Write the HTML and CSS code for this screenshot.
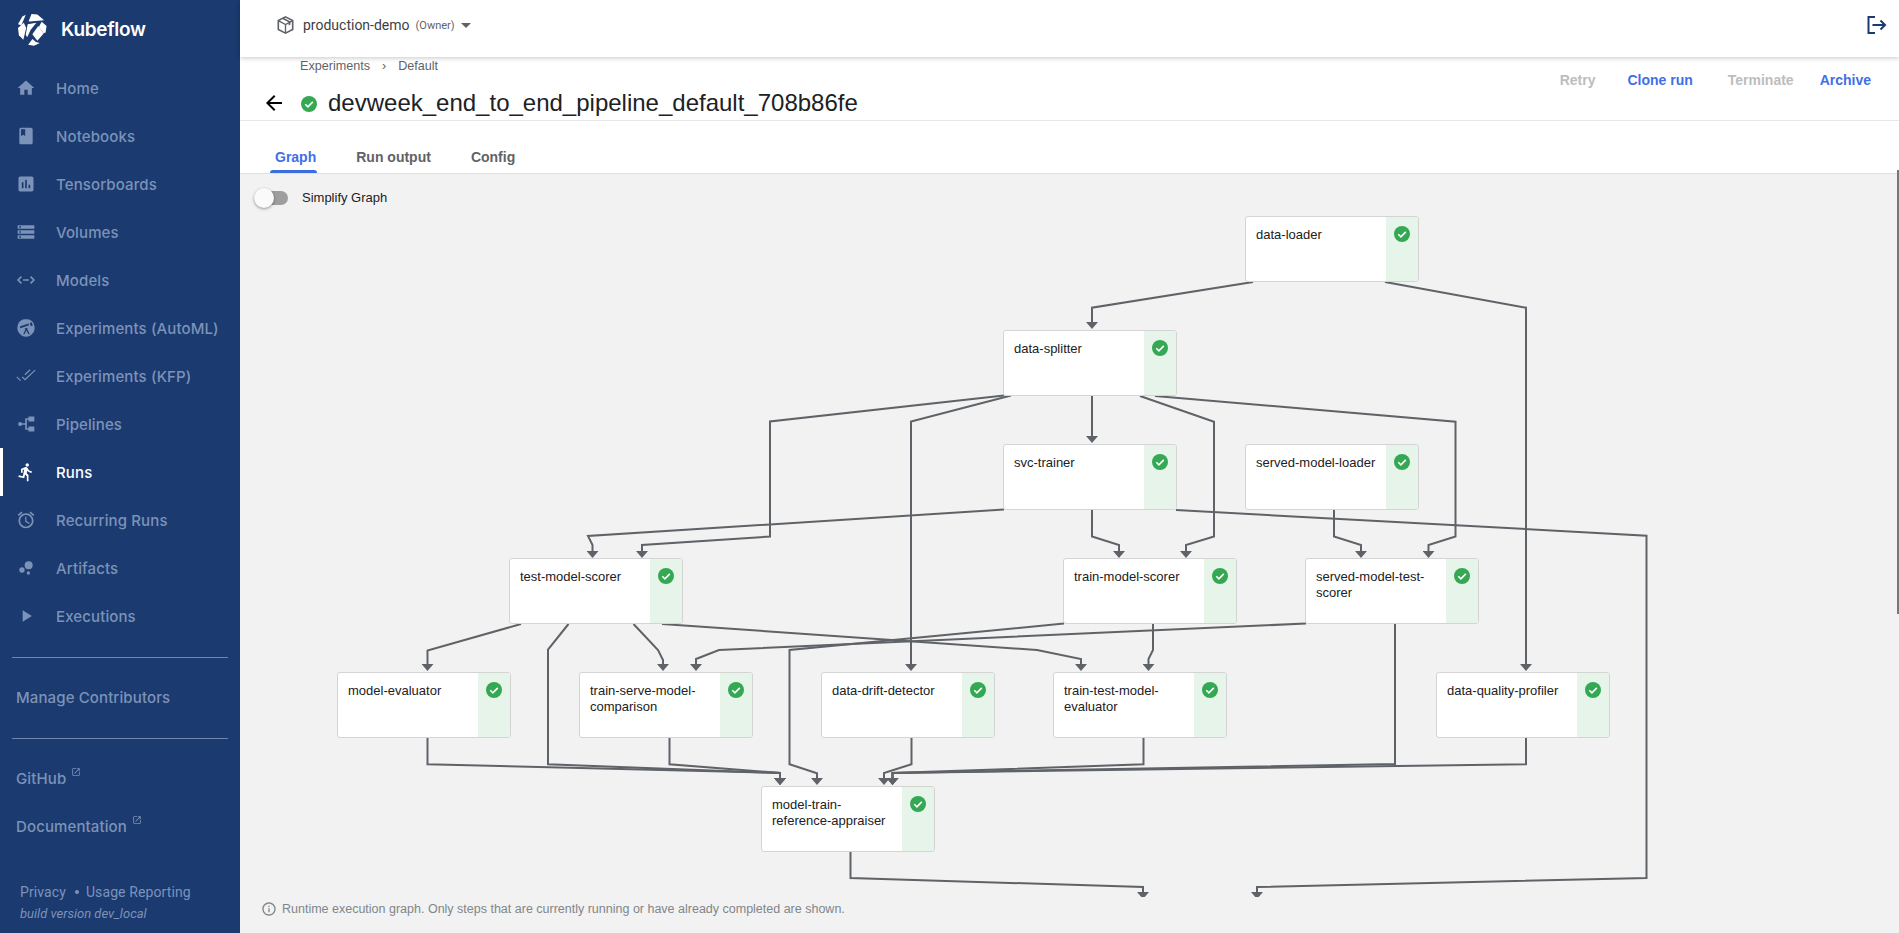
FILE: index.html
```html
<!DOCTYPE html>
<html lang="en">
<head>
<meta charset="utf-8">
<title>Kubeflow</title>
<link rel="stylesheet" href="styles.css">
</head>
<body>
<div class="app">
  <aside class="sidebar">
    <div class="brand">
      <svg class="brand-logo" viewBox="0 0 32 34" fill="#fff">
        <path d="M1 11.500L5.500 3.500L9 1.800L4.500 12.500Z"/>
        <path d="M12 8.500L15 1L21 1.500L28 7.500L13 8.800Z"/>
        <path d="M25.500 9L30.500 13.500L29.500 20L27.500 20.800L22.500 14.500Z"/>
        <path d="M1 15.500L7 10L9.500 15.500L6.500 27.500L2 23Z"/>
        <path d="M11 11.500L20 10L14 17.500L10.500 25L9 22.500Z"/>
        <path d="M22 13.500L27.500 21L21 28.500L15.800 22Z"/>
        <path d="M11.500 32.800L16 26.800L19.500 30L23.500 31L17.500 33.800Z"/>
      </svg>
      <span class="brand-name">Kubeflow</span>
    </div>
    <nav class="nav">
      <a class="nav-item"><svg class="nav-icon" viewBox="0 0 24 24"><path d="M10 20v-6h4v6h5v-8h3L12 3 2 12h3v8z"/></svg>Home</a>
      <a class="nav-item"><svg class="nav-icon" viewBox="0 0 24 24"><path d="M18 2H6c-1.100 0-2 .9-2 2v16c0 1.100.9 2 2 2h12c1.100 0 2-.9 2-2V4c0-1.100-.9-2-2-2zM6 4h5v8l-2.500-1.500L6 12V4z"/></svg>Notebooks</a>
      <a class="nav-item"><svg class="nav-icon" viewBox="0 0 24 24"><path d="M19 3H5c-1.100 0-2 .9-2 2v14c0 1.100.9 2 2 2h14c1.100 0 2-.9 2-2V5c0-1.100-.9-2-2-2zM9 17H7v-7h2v7zm4 0h-2V7h2v10zm4 0h-2v-4h2v4z"/></svg>Tensorboards</a>
      <a class="nav-item"><svg class="nav-icon" viewBox="0 0 24 24"><path d="M2 20h20v-4H2v4zm2-3h2v2H4v-2zM2 4v4h20V4H2zm4 3H4V5h2v2zm-4 7h20v-4H2v4zm2-3h2v2H4v-2z"/></svg>Volumes</a>
      <a class="nav-item"><svg class="nav-icon nav-icon-line" viewBox="0 0 24 24"><path d="M6.500 8L2.500 12l4 4M17.500 8l4 4-4 4M8.500 12h7"/></svg>Models</a>
      <a class="nav-item"><svg class="nav-icon" viewBox="0 0 24 24"><path fill-rule="evenodd" d="M12 1.500c2.500 0 5 .4 7 2.200 2 1.900 3.300 4.700 3.300 8.300 0 2.300-.6 4.300-2 6-2 2.500-4.700 4.500-8.300 4.500s-6.300-2-8.300-4.500C2.300 16.300 1.700 14.300 1.700 12c0-3.600 1.300-6.400 3.300-8.300 2-1.800 4.500-2.200 7-2.200zM4.500 10.300l.7 1.900 10.500-3.400-.8-2.300zM16.400 6l1.500 3.800 2.300-.9L18.700 5zM10.300 12.500l.9 1.700-2.600 5.300h1.600l2.300-4.600 2.400 4.600h1.600l-3-6.200.5-1.500z"/></svg>Experiments (AutoML)</a>
      <a class="nav-item"><svg class="nav-icon" viewBox="0 0 24 24"><path d="M23.500 5.500l-1-1L10.800 15.300l-3-2.800-1 1 4 4zM17.500 5l-1-1-6.300 6 1 1zM.5 13.500l4.500 4.500 1-1-4.500-4.500z"/></svg>Experiments (KFP)</a>
      <a class="nav-item"><svg class="nav-icon" viewBox="0 0 24 24"><path d="M5 9.500a2.500 2.500 0 0 1 2.300 1.500H11V6a1 1 0 0 1 1-1h3V3h7v6h-7V7h-2v10h2v-2h7v6h-7v-2h-3a1 1 0 0 1-1-1v-5H7.300A2.500 2.500 0 1 1 5 9.500z"/></svg>Pipelines</a>
      <a class="nav-item is-active"><svg class="nav-icon" viewBox="0 0 24 24"><path d="M13.490 5.480c1.100 0 2-.9 2-2s-.9-2-2-2-2 .9-2 2 .9 2 2 2zm-3.600 13.900l1-4.400 2.100 2v6h2v-7.500l-2.100-2 .6-3c1.300 1.500 3.300 2.500 5.500 2.500v-2c-1.900 0-3.500-1-4.300-2.400l-1-1.600c-.4-.6-1-1-1.700-1-.3 0-.5.1-.8.1l-5.200 2.200v4.700h2v-3.400l1.800-.7-1.600 8.100-4.900-1-.4 2 7 1.400z"/></svg>Runs</a>
      <a class="nav-item"><svg class="nav-icon" viewBox="0 0 24 24"><path d="M22 5.720l-4.600-3.860-1.290 1.530 4.600 3.860L22 5.720zM7.880 3.390L6.600 1.860 2 5.710l1.290 1.530 4.590-3.850zM12.500 8H11v6l4.750 2.850.75-1.230-4-2.370V8zM12 4c-4.970 0-9 4.030-9 9s4.020 9 9 9c4.970 0 9-4.030 9-9s-4.030-9-9-9zm0 16c-3.870 0-7-3.130-7-7s3.130-7 7-7 7 3.130 7 7-3.130 7-7 7z"/></svg>Recurring Runs</a>
      <a class="nav-item"><svg class="nav-icon" viewBox="0 0 24 24"><circle cx="7.200" cy="14.400" r="3.200"/><circle cx="14.800" cy="18" r="2"/><circle cx="15.200" cy="8.800" r="4.800"/></svg>Artifacts</a>
      <a class="nav-item"><svg class="nav-icon" viewBox="0 0 24 24"><path d="M8 5v14l11-7z"/></svg>Executions</a>
    </nav>
    <div class="side-rule"></div>
    <a class="side-link">Manage Contributors</a>
    <div class="side-rule side-rule-low"></div>
    <a class="side-link">GitHub<svg class="ext-icon" viewBox="0 0 24 24"><path d="M19 19H5V5h7V3H5c-1.110 0-2 .9-2 2v14c0 1.100.89 2 2 2h14c1.100 0 2-.9 2-2v-7h-2v7zM14 3v2h3.590l-9.830 9.830 1.410 1.410L19 6.410V10h2V3h-7z"/></svg></a>
    <a class="side-link">Documentation<svg class="ext-icon" viewBox="0 0 24 24"><path d="M19 19H5V5h7V3H5c-1.110 0-2 .9-2 2v14c0 1.100.89 2 2 2h14c1.100 0 2-.9 2-2v-7h-2v7zM14 3v2h3.590l-9.830 9.830 1.410 1.410L19 6.410V10h2V3h-7z"/></svg></a>
    <div class="side-foot">
      <div class="foot-links"><span>Privacy</span><i class="foot-dot"></i><span>Usage Reporting</span></div>
      <div class="foot-build">build version dev_local</div>
    </div>
  </aside>

  <main class="main">
    <header class="topbar">
      <div class="namespace">
        <svg class="cube" viewBox="0 0 18 20"><path d="M9 1l8 4v10l-8 4-8-4V5z" fill="none" stroke="#5f6368" stroke-width="1.800"/><path d="M1.500 5.500L9 9.500l7.500-4M9 9.500V19" fill="none" stroke="#5f6368" stroke-width="1.500"/><path d="M5 3l7.500 4v3.500l2-1V6L7 2z" fill="#5f6368"/></svg>
        <span class="ns-name">production-demo</span>
        <span class="ns-role">(Owner)</span>
        <i class="ns-caret"></i>
      </div>
      <svg class="logout" viewBox="0 0 20 18"><path d="M8 1H1.500v16H8M5.500 9H18M13.500 4.500L18 9l-4.500 4.500" fill="none" stroke="#1b3a6f" stroke-width="2"/></svg>
    </header>

    <section class="pagehead">
      <div class="head-left">
        <div class="crumbs"><span>Experiments</span><span class="crumb-sep">›</span><span>Default</span></div>
        <div class="title-row">
          <svg class="back" viewBox="0 0 24 24"><path d="M20 11H7.830l5.590-5.590L12 4l-8 8 8 8 1.410-1.410L7.830 13H20v-2z"/></svg>
          <svg class="title-check" viewBox="0 0 16 16"><circle cx="8" cy="8" r="8" fill="#34a853"/><path d="M4.300 8.300l2.600 2.600 4.900-5" fill="none" stroke="#fff" stroke-width="1.600"/></svg>
          <h1 class="title">devweek_end_to_end_pipeline_default_708b86fe</h1>
        </div>
      </div>
      <div class="actions">
        <span class="action is-off action-retry">Retry</span>
        <span class="action action-clone">Clone run</span>
        <span class="action is-off action-term">Terminate</span>
        <span class="action">Archive</span>
      </div>
    </section>

    <div class="tabs">
      <span class="tab is-current">Graph</span>
      <span class="tab">Run output</span>
      <span class="tab">Config</span>
    </div>

    <section class="graph">
      <div class="toggle-row">
        <span class="toggle"><i class="toggle-thumb"></i></span>
        <span class="toggle-label">Simplify Graph</span>
      </div>
      <div class="canvas">
        <svg class="edges" viewBox="240 174 1659 723" width="1659" height="723">
          <defs>
            <marker id="arrow" viewBox="0 0 12 7" refX="6" refY="0" markerWidth="12" markerHeight="7" markerUnits="userSpaceOnUse" orient="0">
              <path d="M0 0h12L6 7z" fill="#5f6368"/>
            </marker>
          </defs>
          <g class="edge-set">
            <polyline points="1253,282 1092,307.700 1092,322"/>
            <polyline points="1385,282 1526,307.700 1526,664"/>
            <polyline points="1004,395.500 770,421.500 770,536.500 642,545 642,551"/>
            <polyline points="1011,395.500 911,421.500 911,664"/>
            <polyline points="1092,396 1092,436"/>
            <polyline points="1140,396 1214,421.700 1214,536.500 1186,545 1186,551"/>
            <polyline points="1155,396 1455.500,421.700 1455.500,536.500 1428.500,545 1428.500,551"/>
            <polyline points="1004,509.500 588,536 592.500,545 592.500,551"/>
            <polyline points="1092,510 1092,536.500 1119,545 1119,551"/>
            <polyline points="1176,510 1646.500,535.700 1646.500,878 1257,887 1257,892"/>
            <polyline points="1334,510 1334,536.500 1361,545 1361,551"/>
            <polyline points="521,624 427.500,650.500 427.500,664"/>
            <polyline points="568.500,624 548,649.500 548,764.300 780,773 780,778"/>
            <polyline points="633.500,624 658,650 663,660 663,664"/>
            <polyline points="662,624 1037,650 1081,659 1081,664"/>
            <polyline points="1064,623.500 789.500,650 789.500,764.300 817,773.300 817,778"/>
            <polyline points="1306,623.500 719,650 696,659 696,664"/>
            <polyline points="1153,624 1153,650 1148.500,659 1148.500,664"/>
            <polyline points="1395,624 1395,764 892.500,773 892.500,778"/>
            <polyline points="427.500,738 427.500,764.300 780,773 780,778"/>
            <polyline points="669.500,738 669.500,764.300 780,773 780,778"/>
            <polyline points="911.500,738 911.500,764.300 884,773 884,778"/>
            <polyline points="1143.500,738 1143.500,764.300 892.500,773 892.500,778"/>
            <polyline points="1526,738 1526,764.300 892.500,773 892.500,778"/>
            <polyline points="850.500,852 850.500,878 1143,887 1143,892"/>
          </g>
        </svg>
        <div class="node" style="left:1005px;top:42px"><div class="node-label">data-loader</div><div class="node-status"><svg class="check" viewBox="0 0 16 16"><circle cx="8" cy="8" r="8"/><path d="M4.300 8.300l2.600 2.600 4.900-5"/></svg></div></div>
        <div class="node" style="left:763px;top:156px"><div class="node-label">data-splitter</div><div class="node-status"><svg class="check" viewBox="0 0 16 16"><circle cx="8" cy="8" r="8"/><path d="M4.300 8.300l2.600 2.600 4.900-5"/></svg></div></div>
        <div class="node" style="left:763px;top:270px"><div class="node-label">svc-trainer</div><div class="node-status"><svg class="check" viewBox="0 0 16 16"><circle cx="8" cy="8" r="8"/><path d="M4.300 8.300l2.600 2.600 4.900-5"/></svg></div></div>
        <div class="node" style="left:1005px;top:270px"><div class="node-label">served-model-loader</div><div class="node-status"><svg class="check" viewBox="0 0 16 16"><circle cx="8" cy="8" r="8"/><path d="M4.300 8.300l2.600 2.600 4.900-5"/></svg></div></div>
        <div class="node" style="left:269px;top:384px"><div class="node-label">test-model-scorer</div><div class="node-status"><svg class="check" viewBox="0 0 16 16"><circle cx="8" cy="8" r="8"/><path d="M4.300 8.300l2.600 2.600 4.900-5"/></svg></div></div>
        <div class="node" style="left:823px;top:384px"><div class="node-label">train-model-scorer</div><div class="node-status"><svg class="check" viewBox="0 0 16 16"><circle cx="8" cy="8" r="8"/><path d="M4.300 8.300l2.600 2.600 4.900-5"/></svg></div></div>
        <div class="node" style="left:1065px;top:384px"><div class="node-label">served-model-test-scorer</div><div class="node-status"><svg class="check" viewBox="0 0 16 16"><circle cx="8" cy="8" r="8"/><path d="M4.300 8.300l2.600 2.600 4.900-5"/></svg></div></div>
        <div class="node" style="left:97px;top:498px"><div class="node-label">model-evaluator</div><div class="node-status"><svg class="check" viewBox="0 0 16 16"><circle cx="8" cy="8" r="8"/><path d="M4.300 8.300l2.600 2.600 4.900-5"/></svg></div></div>
        <div class="node" style="left:339px;top:498px"><div class="node-label">train-serve-model-comparison</div><div class="node-status"><svg class="check" viewBox="0 0 16 16"><circle cx="8" cy="8" r="8"/><path d="M4.300 8.300l2.600 2.600 4.900-5"/></svg></div></div>
        <div class="node" style="left:581px;top:498px"><div class="node-label">data-drift-detector</div><div class="node-status"><svg class="check" viewBox="0 0 16 16"><circle cx="8" cy="8" r="8"/><path d="M4.300 8.300l2.600 2.600 4.900-5"/></svg></div></div>
        <div class="node" style="left:813px;top:498px"><div class="node-label">train-test-model-evaluator</div><div class="node-status"><svg class="check" viewBox="0 0 16 16"><circle cx="8" cy="8" r="8"/><path d="M4.300 8.300l2.600 2.600 4.900-5"/></svg></div></div>
        <div class="node" style="left:1196px;top:498px"><div class="node-label">data-quality-profiler</div><div class="node-status"><svg class="check" viewBox="0 0 16 16"><circle cx="8" cy="8" r="8"/><path d="M4.300 8.300l2.600 2.600 4.900-5"/></svg></div></div>
        <div class="node" style="left:521px;top:612px"><div class="node-label">model-train-reference-appraiser</div><div class="node-status"><svg class="check" viewBox="0 0 16 16"><circle cx="8" cy="8" r="8"/><path d="M4.300 8.300l2.600 2.600 4.900-5"/></svg></div></div>
      </div>
      <div class="graph-note">
        <svg class="info" viewBox="0 0 24 24"><path d="M11 17h2v-6h-2v6zm1-15C6.480 2 2 6.480 2 12s4.480 10 10 10 10-4.480 10-10S17.520 2 12 2zm0 18c-4.410 0-8-3.590-8-8s3.590-8 8-8 8 3.590 8 8-3.590 8-8 8zM11 9h2V7h-2v2z"/></svg>
        <span>Runtime execution graph. Only steps that are currently running or have already completed are shown.</span>
      </div>
      <i class="scroll-thumb"></i>
    </section>
  </main>
</div>
</body>
</html>
```
FILE: styles.css
```css
* { box-sizing: border-box; }
html, body { margin: 0; height: 100%; overflow: hidden; }
body { font-family: "Liberation Sans", Arial, sans-serif; background: #fff; color: #202124; }

.app { display: flex; height: 933px; }

/* Sidebar */
.sidebar { width: 240px; flex: none; background: #1b3a6f; color: #7c93b9; display: flex; flex-direction: column; }
.brand { height: 64px; display: flex; align-items: flex-start; padding: 13px 0 0 17px; }
.brand-logo { width: 31px; height: 33px; flex: none; }
.brand-name { font: 600 19px/34px Inter, sans-serif; color: #fff; margin-left: 13px; letter-spacing: -0.3px; }
.nav { display: flex; flex-direction: column; }
.nav-item { height: 48px; display: flex; align-items: center; padding-left: 16px; font: 500 15px Inter, sans-serif; letter-spacing: .12px; }
.nav-icon { width: 20px; height: 20px; margin-right: 20px; fill: currentColor; flex: none; }
.nav-icon-line { fill: none; stroke: currentColor; stroke-width: 2; }
.nav-item.is-active { color: #fff; box-shadow: inset 3px 0 0 #fff; }
.side-rule { height: 1px; margin: 17px 12px 0; background: #6f87ae; flex: none; }
.side-rule-low { margin-top: 17px; margin-bottom: 15px; }
.side-link { height: 48px; display: flex; align-items: center; padding-left: 16px; font: 500 15px Inter, sans-serif; letter-spacing: .12px; flex: none; }
.side-rule + .side-link { margin-top: 15px; }
.side-rule-low + .side-link { margin-top: 0; }
.ext-icon { width: 10px; height: 10px; fill: currentColor; margin: -12px 0 0 5px; }
.side-foot { margin-top: 32px; padding-left: 20px; font-family: Roboto, sans-serif; }
.foot-links { display: flex; align-items: center; font-size: 14px; line-height: 20px; letter-spacing: .1px; }
.foot-dot { width: 4px; height: 4px; border-radius: 50%; background: currentColor; margin: 0 7px 0 9px; }
.foot-build { font-size: 13px; font-style: italic; line-height: 20px; margin-top: 2px; }

/* Main column */
.main { flex: 1; min-width: 0; display: flex; flex-direction: column; }
.topbar { height: 57px; flex: none; display: flex; align-items: center; justify-content: space-between; padding: 0 12px 7px 37px; background: #fff; box-shadow: 0 1px 5px rgba(0,0,0,.22); position: relative; z-index: 1; }
.namespace { display: flex; align-items: center; color: #5f6368; }
.cube { width: 17px; height: 18px; margin-right: 9px; }
.ns-name { font: 14px Roboto, sans-serif; color: #3c4043; }
.ns-role { font: 11px Roboto, sans-serif; margin-left: 6px; }
.ns-caret { width: 0; height: 0; border: 5px solid transparent; border-top-color: #5f6368; border-bottom: 0; margin-left: 6px; }
.logout { width: 20px; height: 18px; }

.pagehead { height: 64px; flex: none; display: flex; justify-content: space-between; border-bottom: 1px solid #e8e8e8; }
.head-left { display: flex; flex-direction: column; }
.crumbs { display: flex; padding: 2px 0 0 60px; font: 12.600px/14px "Liberation Sans", Arial, sans-serif; color: #5f6368; }
.crumb-sep { margin: 0 12px; }
.title-row { display: flex; align-items: center; padding: 15px 0 0 24px; }
.back { width: 24px; height: 24px; flex: none; fill: #000; margin-right: 15px; margin-left: -2px; }
.title-check { width: 16px; height: 16px; margin-right: 11px; flex: none; margin-top: 2px; }
.title { margin: 0; font: 400 24px/30px "Liberation Sans", Arial, sans-serif; color: #202124; }
.actions { display: flex; padding: 15px 0 0; margin-right: 28px; font: 700 14px/16px "Liberation Sans", Arial, sans-serif; color: #3f6fe8; }
.action { display: block; }
.action.is-off { color: #bdbdbd; }
.action-retry { margin-right: 32px; }
.action-clone { margin-right: 35px; }
.action-term { margin-right: 26px; }

.tabs { height: 53px; flex: none; display: flex; padding-left: 30px; border-bottom: 1px solid #e0e0e0; font: 700 14px/20px "Liberation Sans", Arial, sans-serif; color: #5f6368; }
.tab { padding: 26px 0 0 0; margin-left: 5px; margin-right: 35px; position: relative; }
.tab.is-current { color: #3f6fe8; }
.tab.is-current::after { content: ""; position: absolute; left: -5px; right: -1px; bottom: 0; height: 3px; background: #3b6de0; border-radius: 3px 3px 0 0; }

/* Graph */
.graph { flex: 1; background: #f2f2f2; position: relative; display: flex; flex-direction: column; min-height: 0; }
.toggle-row { position: absolute; left: 14px; top: 16px; z-index: 2; display: flex; align-items: center; }
.toggle { width: 34px; height: 14px; border-radius: 7px; background: #9e9e9e; position: relative; display: block; }
.toggle-thumb { position: absolute; left: 0; top: -3px; width: 20px; height: 20px; border-radius: 50%; background: #fafafa; box-shadow: 0 1px 3px rgba(0,0,0,.4); }
.toggle-label { font-size: 13px; margin-left: 14px; color: #202124; }
.canvas { position: relative; height: 723px; flex: none; overflow: hidden; }
.edges { position: absolute; left: 0; top: 0; display: block; }
.edge-set polyline { fill: none; stroke: #5f6368; stroke-width: 2; marker-end: url(#arrow); }
.node { position: absolute; width: 174px; height: 66px; display: flex; background: #fff; border: 1px solid #d4d4d4; border-radius: 3px; }
.node-label { flex: 1; min-width: 0; padding: 10px 8px 0 10px; font-size: 13px; line-height: 16px; color: #202124; }
.node-status { width: 32px; flex: none; background: #e6f4ea; display: flex; justify-content: center; padding-top: 9px; border-radius: 0 2px 2px 0; }
.check { width: 16px; height: 16px; }
.check circle { fill: #34a853; }
.check path { fill: none; stroke: #fff; stroke-width: 1.600; }
.graph-note { height: 36px; flex: none; display: flex; align-items: center; padding: 0 0 12px 21px; font-size: 12.500px; color: #80868b; }
.info { width: 16px; height: 16px; fill: #80868b; margin-right: 5px; }
.scroll-thumb { position: absolute; right: 0; top: -4px; width: 2px; height: 444px; background: #777; }
```
